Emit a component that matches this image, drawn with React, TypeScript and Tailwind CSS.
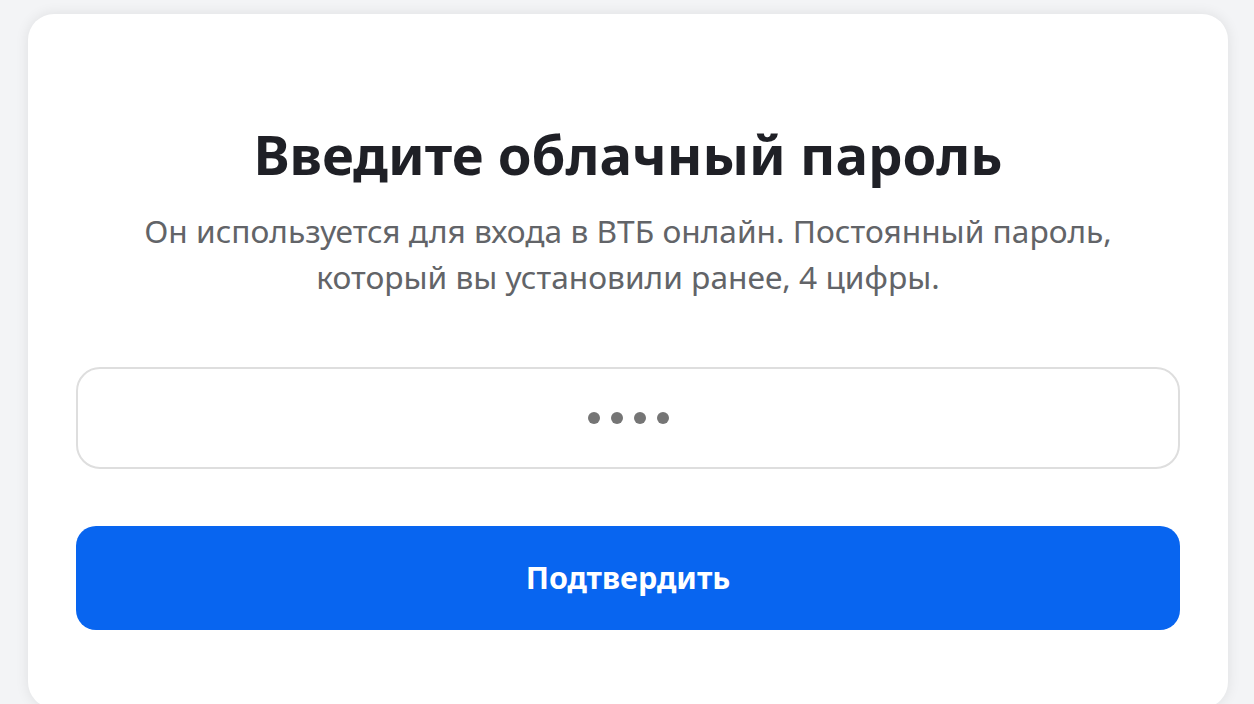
export default function App() {
  return (
    <div className="h-[704px] w-[1254px] overflow-hidden bg-[#f3f4f6] pl-[28px] pr-[26px] pt-[14px]" style={{ fontFamily: '"Noto Sans", "Open Sans", sans-serif' }}>
      <div className="h-[694px] rounded-[26px] bg-white px-[48px] pt-[106px] shadow-[0_0_14px_rgba(0,0,0,0.09)]">
        <h1 className="text-center text-[54.5px] font-bold leading-[68px] text-[#1f2026]">Введите облачный пароль</h1>
        <p className="mt-[20px] text-center text-[31.7px] font-[450] leading-[46px] text-[#626468]">
          Он используется для входа в ВТБ онлайн. Постоянный пароль,
          <br />
          который вы установили ранее, 4 цифры.
        </p>
        <div className="mt-[67px] flex h-[102px] items-center justify-center gap-[11px] rounded-[24px] border-2 border-[#dedede]">
          <span className="h-[12px] w-[12px] rounded-full bg-[#757575]" />
          <span className="h-[12px] w-[12px] rounded-full bg-[#757575]" />
          <span className="h-[12px] w-[12px] rounded-full bg-[#757575]" />
          <span className="h-[12px] w-[12px] rounded-full bg-[#757575]" />
        </div>
        <button className="mt-[57px] flex h-[104px] w-full items-center justify-center rounded-[20px] bg-[#0865f0] text-[30.5px] font-bold text-white">
          Подтвердить
        </button>
      </div>
    </div>
  );
}
